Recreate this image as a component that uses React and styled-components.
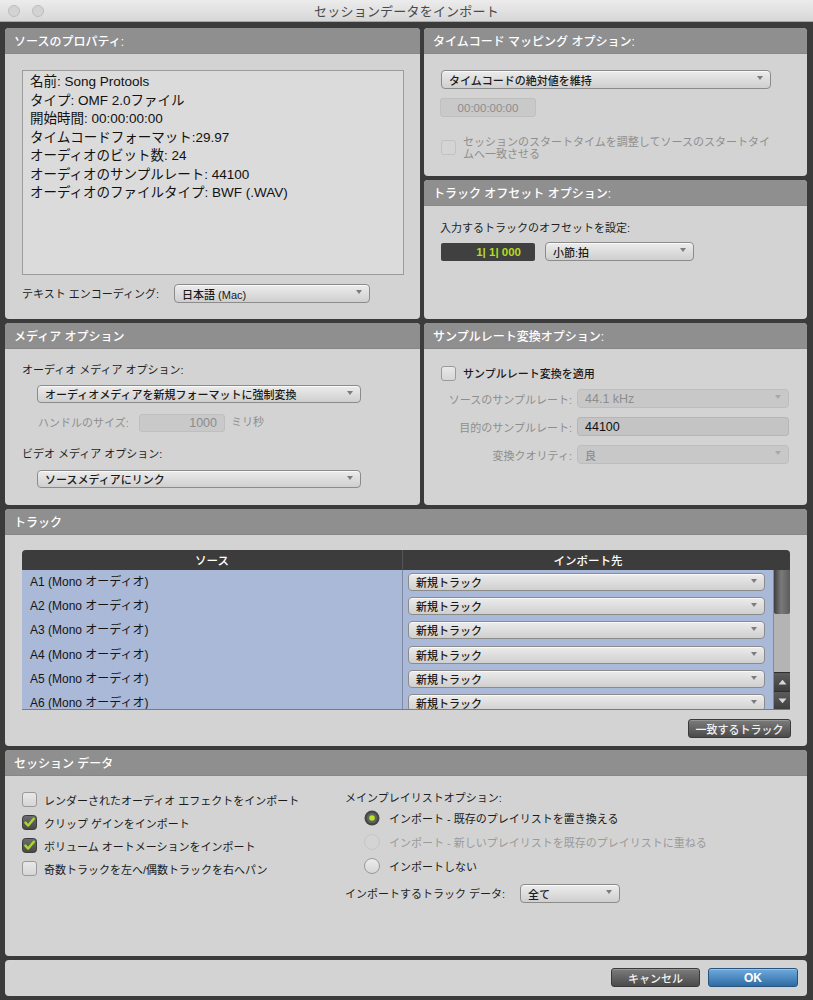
import styled, { createGlobalStyle } from "styled-components";

const GlobalStyle = createGlobalStyle`
  html, body {
    margin: 0;
    padding: 0;
    background: #3b3b3b;
  }
  body {
    font-family: "Liberation Sans", "Noto Sans CJK JP", sans-serif;
    -webkit-font-smoothing: antialiased;
  }
  * {
    box-sizing: border-box;
  }
`;

const SOURCE_LINES = [
  "名前: Song Protools",
  "タイプ: OMF 2.0ファイル",
  "開始時間: 00:00:00:00",
  "タイムコードフォーマット:29.97",
  "オーディオのビット数: 24",
  "オーディオのサンプルレート: 44100",
  "オーディオのファイルタイプ: BWF (.WAV)",
];

const TRACKS = ["A1", "A2", "A3", "A4", "A5", "A6"];

const SESSION_CHECKS = [
  { label: "レンダーされたオーディオ エフェクトをインポート", checked: false },
  { label: "クリップ ゲインをインポート", checked: true },
  { label: "ボリューム オートメーションをインポート", checked: true },
  { label: "奇数トラックを左へ/偶数トラックを右へパン", checked: false },
];

const PLAYLIST_OPTIONS = [
  { label: "インポート - 既存のプレイリストを置き換える", state: "on" },
  { label: "インポート - 新しいプレイリストを既存のプレイリストに重ねる", state: "disabled" },
  { label: "インポートしない", state: "off" },
];

function Select({ width, height = 19, disabled, children }) {
  return (
    <SelectBox $w={width} $h={height} $disabled={disabled}>
      <span>{children}</span>
      <Caret $disabled={disabled} />
    </SelectBox>
  );
}

function CheckBox({ checked, disabled }) {
  if (checked) {
    return (
      <svg width="15" height="15" viewBox="0 0 15 15">
        <defs>
          <linearGradient id="cbg" x1="0" y1="0" x2="0" y2="1">
            <stop offset="0" stopColor="#6e6e6e" />
            <stop offset="1" stopColor="#474747" />
          </linearGradient>
        </defs>
        <rect x="0.5" y="0.5" width="14" height="14" rx="3" fill="url(#cbg)" stroke="#3a3a3a" />
        <path
          d="M3.4 7.6 L6.2 10.6 L11.8 3.8"
          fill="none"
          stroke="#a8d828"
          strokeWidth="2.4"
          strokeLinecap="round"
          strokeLinejoin="round"
        />
      </svg>
    );
  }
  return <EmptyBox $disabled={disabled} />;
}

function Radio({ state }) {
  if (state === "on") {
    return (
      <svg width="16" height="16" viewBox="0 0 16 16">
        <circle cx="8" cy="8" r="7.5" fill="#464646" />
        <circle cx="8" cy="8" r="5.2" fill="#626262" />
        <circle cx="8" cy="8" r="2.8" fill="#b9e41f" />
      </svg>
    );
  }
  return <EmptyRadio $disabled={state === "disabled"} />;
}

function Panel({ title, area, children }) {
  return (
    <PanelFrame $area={area}>
      <PanelHeader>{title}</PanelHeader>
      {children}
    </PanelFrame>
  );
}

export default function App() {
  return (
    <Window>
      <GlobalStyle />
      <TitleBar>
        <Lights>
          <Light />
          <Light />
        </Lights>
        <Title>セッションデータをインポート</Title>
        <span />
      </TitleBar>

      <Body>
        {/* Source properties */}
        <Panel title="ソースのプロパティ:" area="1 / 1 / 3 / 2">
          <SourceBody>
            <ListBox>
              {SOURCE_LINES.map((l) => (
                <ListLine key={l}>{l}</ListLine>
              ))}
            </ListBox>
            <FieldRow $top={9}>
              <Label $w={152}>テキスト エンコーディング:</Label>
              <Select width={196}>日本語 (Mac)</Select>
            </FieldRow>
          </SourceBody>
        </Panel>

        {/* Timecode mapping */}
        <Panel title="タイムコード マッピング オプション:" area="1 / 2 / 2 / 3">
          <TimecodeBody>
            <Select width={330}>タイムコードの絶対値を維持</Select>
            <TimeField>00:00:00:00</TimeField>
            <WrapCheck>
              <CheckBox disabled />
              <WrapLabel>
                セッションのスタートタイムを調整してソースのスタートタイ
                <br />
                ムへ一致させる
              </WrapLabel>
            </WrapCheck>
          </TimecodeBody>
        </Panel>

        {/* Track offset */}
        <Panel title="トラック オフセット オプション:" area="2 / 2 / 3 / 3">
          <OffsetBody>
            <Label>入力するトラックのオフセットを設定:</Label>
            <FieldRow $top={7}>
              <Counter>1| 1| 000</Counter>
              <Spacer $w={10} />
              <Select width={149}>小節:拍</Select>
            </FieldRow>
          </OffsetBody>
        </Panel>

        {/* Media options */}
        <Panel title="メディア オプション" area="3 / 1 / 4 / 2">
          <MediaBody>
            <Label>オーディオ メディア オプション:</Label>
            <Indent $top={8}>
              <Select width={324} height={18}>
                オーディオメディアを新規フォーマットに強制変換
              </Select>
            </Indent>
            <FieldRow $top={11}>
              <Label $w={117} $muted $pad={16}>
                ハンドルのサイズ:
              </Label>
              <FlatField $w={86} $align="right" $muted>
                1000
              </FlatField>
              <Unit>ミリ秒</Unit>
            </FieldRow>
            <Label $top={15}>ビデオ メディア オプション:</Label>
            <Indent $top={9}>
              <Select width={324} height={18}>
                ソースメディアにリンク
              </Select>
            </Indent>
          </MediaBody>
        </Panel>

        {/* Sample rate conversion */}
        <Panel title="サンプルレート変換オプション:" area="3 / 2 / 4 / 3">
          <RateBody>
            <FieldRow>
              <CheckBox />
              <CheckLabel $strong>サンプルレート変換を適用</CheckLabel>
            </FieldRow>
            <RateGrid>
              <RateLabel>ソースのサンプルレート:</RateLabel>
              <Select width={212} disabled>
                <LatinText>44.1 kHz</LatinText>
              </Select>
              <RateLabel>目的のサンプルレート:</RateLabel>
              <FlatField $w={212} $dark>
                <LatinText>44100</LatinText>
              </FlatField>
              <RateLabel>変換クオリティ:</RateLabel>
              <Select width={212} disabled>
                良
              </Select>
            </RateGrid>
          </RateBody>
        </Panel>

        {/* Tracks */}
        <Panel title="トラック" area="4 / 1 / 5 / 3">
          <TrackBody>
            <Table>
              <HeadCell>ソース</HeadCell>
              <HeadCell>インポート先</HeadCell>
              <HeadCell />
              <Rows>
                {TRACKS.map((t) => (
                  <TrackRow key={t}>
                    <NameCell>{t} (Mono オーディオ)</NameCell>
                    <DestCell>
                      <Select width={357} height={18}>
                        新規トラック
                      </Select>
                    </DestCell>
                  </TrackRow>
                ))}
              </Rows>
              <ScrollBar>
                <Thumb />
                <Track />
                <ArrowBtn>
                  <svg width="9" height="6" viewBox="0 0 9 6">
                    <path d="M0.5 5.5 L4.5 0.8 L8.5 5.5 Z" fill="#d8d8d8" />
                  </svg>
                </ArrowBtn>
                <ArrowBtn>
                  <svg width="9" height="6" viewBox="0 0 9 6">
                    <path d="M0.5 0.5 L4.5 5.2 L8.5 0.5 Z" fill="#d8d8d8" />
                  </svg>
                </ArrowBtn>
              </ScrollBar>
            </Table>
            <ButtonRow>
              <DarkButton $w={103}>一致するトラック</DarkButton>
            </ButtonRow>
          </TrackBody>
        </Panel>

        {/* Session data */}
        <Panel title="セッション データ" area="5 / 1 / 6 / 3">
          <SessionBody>
            <Column $pad={17}>
              {SESSION_CHECKS.map((c) => (
                <CheckRow key={c.label}>
                  <CheckBox checked={c.checked} />
                  <CheckLabel>{c.label}</CheckLabel>
                </CheckRow>
              ))}
            </Column>
            <Column>
              <Heading>メインプレイリストオプション:</Heading>
              {PLAYLIST_OPTIONS.map((o) => (
                <RadioRow key={o.label}>
                  <Radio state={o.state} />
                  <CheckLabel $muted={o.state === "disabled"}>{o.label}</CheckLabel>
                </RadioRow>
              ))}
              <FieldRow $top={6}>
                <Label $w={175}>インポートするトラック データ:</Label>
                <Select width={100}>全て</Select>
              </FieldRow>
            </Column>
          </SessionBody>
        </Panel>

        {/* Footer */}
        <Footer>
          <DarkButton $w={89}>キャンセル</DarkButton>
          <OkButton>OK</OkButton>
        </Footer>
      </Body>
    </Window>
  );
}

const Window = styled.div`
  width: 813px;
  height: 1000px;
  background: #3b3b3b;
  display: flex;
  flex-direction: column;
  overflow: hidden;
`;

const TitleBar = styled.div`
  height: 22px;
  flex: none;
  display: grid;
  grid-template-columns: 60px 1fr 60px;
  align-items: center;
  background: linear-gradient(#ececec, #d7d7d7);
  border-bottom: 1px solid #a8a8a8;
`;

const Lights = styled.div`
  display: flex;
  gap: 12px;
  padding-left: 8px;
`;

const Light = styled.span`
  width: 12px;
  height: 12px;
  border-radius: 50%;
  background: #d3d3d3;
  border: 1px solid #bdbdbd;
`;

const Title = styled.div`
  text-align: center;
  font-size: 13px;
  color: #4a4a4a;
  letter-spacing: 0.2px;
`;

const Body = styled.div`
  flex: 1;
  padding: 6px 6px 3px 5px;
  display: grid;
  grid-template-columns: 415px 383px;
  grid-template-rows: 148px 139px 182px 237px 206px 36px;
  gap: 4px;
`;

const PanelFrame = styled.section`
  grid-area: ${(p) => p.$area};
  background: #d3d3d3;
  border-radius: 4px;
  overflow: hidden;
  display: flex;
  flex-direction: column;
  color: #1e1e1e;
`;

const PanelHeader = styled.header`
  height: 26px;
  flex: none;
  background: #8f8f8f;
  color: #fff;
  font-size: 12px;
  font-weight: 500;
  padding-left: 9px;
  display: flex;
  align-items: center;
  border-bottom: 1px solid #878787;
`;

const SourceBody = styled.div`
  padding: 16px 0 0 17px;
`;

const ListBox = styled.div`
  width: 382px;
  height: 205px;
  background: #dbdbdb;
  border: 1px solid #9c9c9c;
  padding: 2px 7px 0;
`;

const ListLine = styled.div`
  font-size: 13.5px;
  line-height: 18.5px;
  color: #111;
  white-space: nowrap;
`;

const FieldRow = styled.div`
  display: flex;
  align-items: center;
  margin-top: ${(p) => p.$top || 0}px;
`;

const Label = styled.div`
  width: ${(p) => (p.$w ? `${p.$w}px` : "auto")};
  flex: none;
  font-size: 11px;
  line-height: 14px;
  margin-top: ${(p) => p.$top || 0}px;
  padding-left: ${(p) => p.$pad || 0}px;
  color: ${(p) => (p.$muted ? "#8e8e8e" : "#1e1e1e")};
  white-space: nowrap;
`;

const SelectBox = styled.div`
  width: ${(p) => p.$w}px;
  height: ${(p) => p.$h}px;
  flex: none;
  display: flex;
  align-items: center;
  padding-left: 7px;
  border-radius: 4px;
  border: 1px solid ${(p) => (p.$disabled ? "#bdbdbd" : "#8b8b8b")};
  background: ${(p) =>
    p.$disabled ? "#c8c8c8" : "linear-gradient(#ececec, #cfcfcf)"};
  box-shadow: ${(p) =>
    p.$disabled ? "none" : "inset 0 1px 0 rgba(255,255,255,0.7)"};
  color: ${(p) => (p.$disabled ? "#8e8e8e" : "#1a1a1a")};
  font-size: 11px;
  font-weight: 500;
  white-space: nowrap;
`;

const Caret = styled.span`
  margin-left: auto;
  margin-right: 7px;
  align-self: flex-start;
  margin-top: 5px;
  width: 0;
  height: 0;
  border-left: 3.5px solid transparent;
  border-right: 3.5px solid transparent;
  border-top: 4px solid ${(p) => (p.$disabled ? "#a8a8a8" : "#7c7c7c")};
`;

const TimecodeBody = styled.div`
  padding: 16px 0 0 17px;
`;

const TimeField = styled.div`
  width: 96px;
  height: 19px;
  margin: 9px 0 0 -1px;
  border-radius: 3px;
  background: #c9c9c9;
  border: 1px solid #bfbfbf;
  color: #8c8c8c;
  font-size: 11.5px;
  display: flex;
  align-items: center;
  justify-content: center;
`;

const WrapCheck = styled.div`
  display: flex;
  align-items: flex-start;
  margin-top: 19px;
  & > :first-child {
    margin-top: 4px;
  }
`;

const WrapLabel = styled.div`
  margin-left: 7px;
  font-size: 11px;
  line-height: 12px;
  color: #8e8e8e;
  white-space: nowrap;
`;

const EmptyBox = styled.span`
  width: 15px;
  height: 15px;
  flex: none;
  border-radius: 3px;
  border: 1px solid ${(p) => (p.$disabled ? "#c2c2c2" : "#9a9a9a")};
  background: ${(p) =>
    p.$disabled ? "#d4d4d4" : "linear-gradient(#e8e8e8, #d6d6d6)"};
`;

const EmptyRadio = styled.span`
  width: 16px;
  height: 16px;
  flex: none;
  border-radius: 50%;
  border: 1px solid ${(p) => (p.$disabled ? "#c6c6c6" : "#9a9a9a")};
  background: ${(p) =>
    p.$disabled ? "#d4d4d4" : "linear-gradient(#ececec, #d6d6d6)"};
`;

const OffsetBody = styled.div`
  padding: 15px 0 0 16px;
`;

const Counter = styled.div`
  width: 94px;
  height: 18px;
  margin-left: 1px;
  background: #404040;
  border-radius: 2px;
  color: #b3dc20;
  font-size: 11.5px;
  font-weight: 700;
  display: flex;
  align-items: center;
  justify-content: flex-end;
  padding-right: 14px;
  white-space: pre;
`;

const Spacer = styled.span`
  width: ${(p) => p.$w}px;
  flex: none;
`;

const MediaBody = styled.div`
  padding: 14px 0 0 17px;
`;

const Indent = styled.div`
  margin: ${(p) => p.$top || 0}px 0 0 15px;
`;

const FlatField = styled.div`
  width: ${(p) => p.$w}px;
  height: ${(p) => (p.$dark ? 19 : 18)}px;
  flex: none;
  border-radius: 3px;
  background: ${(p) => (p.$dark ? "#c4c4c4" : "#c9c9c9")};
  border: 1px solid ${(p) => (p.$dark ? "#b6b6b6" : "#bfbfbf")};
  color: ${(p) => (p.$muted ? "#8c8c8c" : "#111")};
  display: flex;
  align-items: center;
  justify-content: ${(p) => (p.$align === "right" ? "flex-end" : "flex-start")};
  padding: 0 7px;
  font-size: 12.5px;
`;

const Unit = styled.span`
  margin-left: 6px;
  align-self: flex-start;
  margin-top: -1px;
  font-size: 11px;
  color: #8c8c8c;
`;

const LatinText = styled.span`
  font-size: 12.5px;
  font-weight: 400;
`;

const RateBody = styled.div`
  padding: 16px 0 0 17px;
`;

const RateGrid = styled.div`
  display: grid;
  grid-template-columns: 136px 212px;
  grid-auto-rows: 19px;
  row-gap: 9px;
  align-items: center;
  margin-top: 8px;
`;

const RateLabel = styled.div`
  text-align: right;
  padding-right: 5px;
  font-size: 11px;
  color: #8e8e8e;
  white-space: nowrap;
`;

const CheckLabel = styled.span`
  margin-left: ${(p) => (p.$muted ? 9 : 7)}px;
  font-size: 11px;
  font-weight: ${(p) => (p.$strong ? 500 : 400)};
  color: ${(p) => (p.$muted ? "#9a9a9a" : "#1a1a1a")};
  white-space: nowrap;
`;

const TrackBody = styled.div`
  padding: 15px 17px 0 17px;
`;

const Table = styled.div`
  height: 160px;
  display: grid;
  grid-template-columns: 381px 370px 17px;
  grid-template-rows: 20px 140px;
  border-radius: 4px 4px 0 0;
  overflow: hidden;
  background: #a9b9d7;
  border-bottom: 1px solid #7b7b7b;
`;

const HeadCell = styled.div`
  background: #3c3c3c;
  color: #fff;
  font-size: 11.5px;
  font-weight: 500;
  display: flex;
  align-items: center;
  justify-content: center;
  &:first-child {
    border-right: 1px solid #555;
  }
`;

const Rows = styled.div`
  grid-column: 1 / 3;
  overflow: hidden;
`;

const TrackRow = styled.div`
  height: 24.2px;
  display: grid;
  grid-template-columns: 381px 1fr;
`;

const NameCell = styled.div`
  padding: 3px 0 0 8px;
  line-height: 18px;
  font-size: 12px;
  color: #151515;
  border-right: 1px solid #7f8ba3;
  white-space: nowrap;
`;

const DestCell = styled.div`
  padding: 3px 0 0 5px;
`;

const ScrollBar = styled.div`
  display: flex;
  flex-direction: column;
  background: #b4b4b4;
  border-left: 1px solid #8a8a8a;
`;

const Thumb = styled.div`
  height: 44px;
  flex: none;
  background: linear-gradient(to right, #3e3e3e, #7a7a7a 45%, #5c5c5c);
  border-radius: 0 0 2px 2px;
`;

const Track = styled.div`
  flex: 1;
`;

const ArrowBtn = styled.div`
  height: 19px;
  flex: none;
  display: flex;
  align-items: center;
  justify-content: center;
  background: linear-gradient(#5c5c5c, #3d3d3d);
  border-top: 1px solid #2e2e2e;
`;

const ButtonRow = styled.div`
  display: flex;
  justify-content: flex-end;
  margin: 9px -1px 0 0;
`;

const DarkButton = styled.button`
  width: ${(p) => p.$w}px;
  height: 19px;
  padding: 0;
  border-radius: 3px;
  border: 1px solid #3a3a3a;
  background: linear-gradient(#7c7c7c, #4a4a4a);
  box-shadow: inset 0 1px 0 rgba(255, 255, 255, 0.2);
  color: #f2f2f2;
  font-family: inherit;
  font-size: 11px;
  font-weight: 500;
  white-space: nowrap;
`;

const OkButton = styled.button`
  width: 90px;
  height: 19px;
  padding: 0;
  border-radius: 3px;
  border: 1px solid #26537c;
  background: linear-gradient(#6eaadd, #2f6ca3);
  box-shadow: inset 0 1px 0 rgba(255, 255, 255, 0.3);
  color: #fff;
  font-family: inherit;
  font-size: 12px;
  font-weight: 700;
`;

const SessionBody = styled.div`
  padding-top: 12px;
  display: grid;
  grid-template-columns: 340px 1fr;
`;

const Column = styled.div`
  padding-left: ${(p) => p.$pad || 0}px;
  display: flex;
  flex-direction: column;
`;

const CheckRow = styled.div`
  height: 23px;
  display: flex;
  align-items: center;
`;

const Heading = styled.div`
  height: 18px;
  display: flex;
  align-items: center;
  font-size: 11px;
  font-weight: 400;
`;

const RadioRow = styled.div`
  height: 24px;
  display: flex;
  align-items: center;
  padding-left: 19px;
  & > span:last-child {
    margin-left: 9px;
  }
`;

const Footer = styled.footer`
  grid-area: 6 / 1 / 7 / 3;
  background: #d3d3d3;
  border-radius: 4px;
  display: flex;
  align-items: center;
  justify-content: flex-end;
  gap: 8px;
  padding: 0 9px 1px 0;
`;
